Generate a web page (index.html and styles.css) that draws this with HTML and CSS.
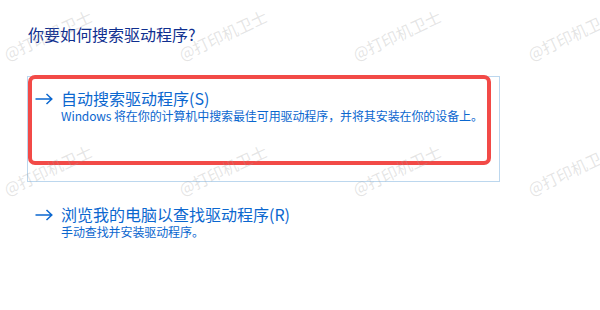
FILE: index.html
```html
<!DOCTYPE html>
<html lang="zh-CN">
<head>
<meta charset="utf-8">
<title>更新驱动程序</title>
<link rel="stylesheet" href="styles.css">
</head>
<body>
<div class="page">
  <h1 class="title">你要如何搜索驱动程序?</h1>

  <div class="option option-focus">
    <span class="arrow"><svg width="18" height="12" viewBox="0 0 18 12"><path d="M0.5 6H16.5M11.5 1L16.8 6L11.5 11" fill="none" stroke="currentColor" stroke-width="1.5"/></svg></span>
    <div class="option-text">
      <div class="option-title">自动搜索驱动程序(S)</div>
      <div class="option-desc">Windows 将在你的计算机中搜索最佳可用驱动程序，并将其安装在你的设备上。</div>
    </div>
    <div class="highlight"></div>
  </div>

  <div class="option">
    <span class="arrow"><svg width="18" height="12" viewBox="0 0 18 12"><path d="M0.5 6H16.5M11.5 1L16.8 6L11.5 11" fill="none" stroke="currentColor" stroke-width="1.5"/></svg></span>
    <div class="option-text">
      <div class="option-title">浏览我的电脑以查找驱动程序(R)</div>
      <div class="option-desc">手动查找并安装驱动程序。</div>
    </div>
  </div>

  <div class="watermarks">
    <span class="wm">@打印机卫士</span>
    <span class="wm">@打印机卫士</span>
    <span class="wm">@打印机卫士</span>
    <span class="wm">@打印机卫士</span>
    <span class="wm">@打印机卫士</span>
    <span class="wm">@打印机卫士</span>
    <span class="wm">@打印机卫士</span>
    <span class="wm">@打印机卫士</span>
  </div>
</div>
</body>
</html>
```

FILE: styles.css
```css
* { box-sizing: border-box; }

html, body {
  margin: 0;
  padding: 0;
  background: #ffffff;
}

body {
  font-family: "Noto Sans CJK SC", "Noto Sans", sans-serif;
}

.page {
  position: relative;
  width: 600px;
  height: 310px;
  overflow: hidden;
  padding-top: 23px;
}

.title {
  margin: 0 0 31px 28px;
  font-size: 16px;
  line-height: 22px;
  font-weight: normal;
  color: #0f2f8f;
}

.option {
  position: relative;
  display: flex;
  align-items: flex-start;
  margin-left: 27px;
  width: 473px;
  border: 1px solid transparent;
  padding: 11px 0 0 7px;
  color: #0b67cf;
}

.option-focus {
  height: 106px;
  border-color: #bcd7ee;
}

.option + .option {
  margin-top: 10px;
}

.arrow {
  display: flex;
  width: 26px;
  height: 20px;
  align-items: center;
  padding-top: 1px;
}

.option-title {
  font-size: 16px;
  line-height: 20px;
}

.option-desc {
  font-size: 12px;
  line-height: 16px;
  letter-spacing: -0.1px;
}

.highlight {
  position: absolute;
  left: 0;
  top: -2px;
  width: 463px;
  height: 90px;
  border: 4px solid #f24a47;
  border-radius: 7px;
}

.watermarks {
  position: absolute;
  inset: 0;
  pointer-events: none;
  display: grid;
  grid-template-columns: repeat(4, 174.5px);
  grid-template-rows: repeat(2, 135px);
  padding: 46px 0 0 8px;
}

.wm {
  display: block;
  height: 16px;
  font-size: 16px;
  line-height: 16px;
  white-space: nowrap;
  color: rgba(160, 160, 160, 0.28);
  transform: rotate(-25deg);
  transform-origin: 0 100%;
}
```
